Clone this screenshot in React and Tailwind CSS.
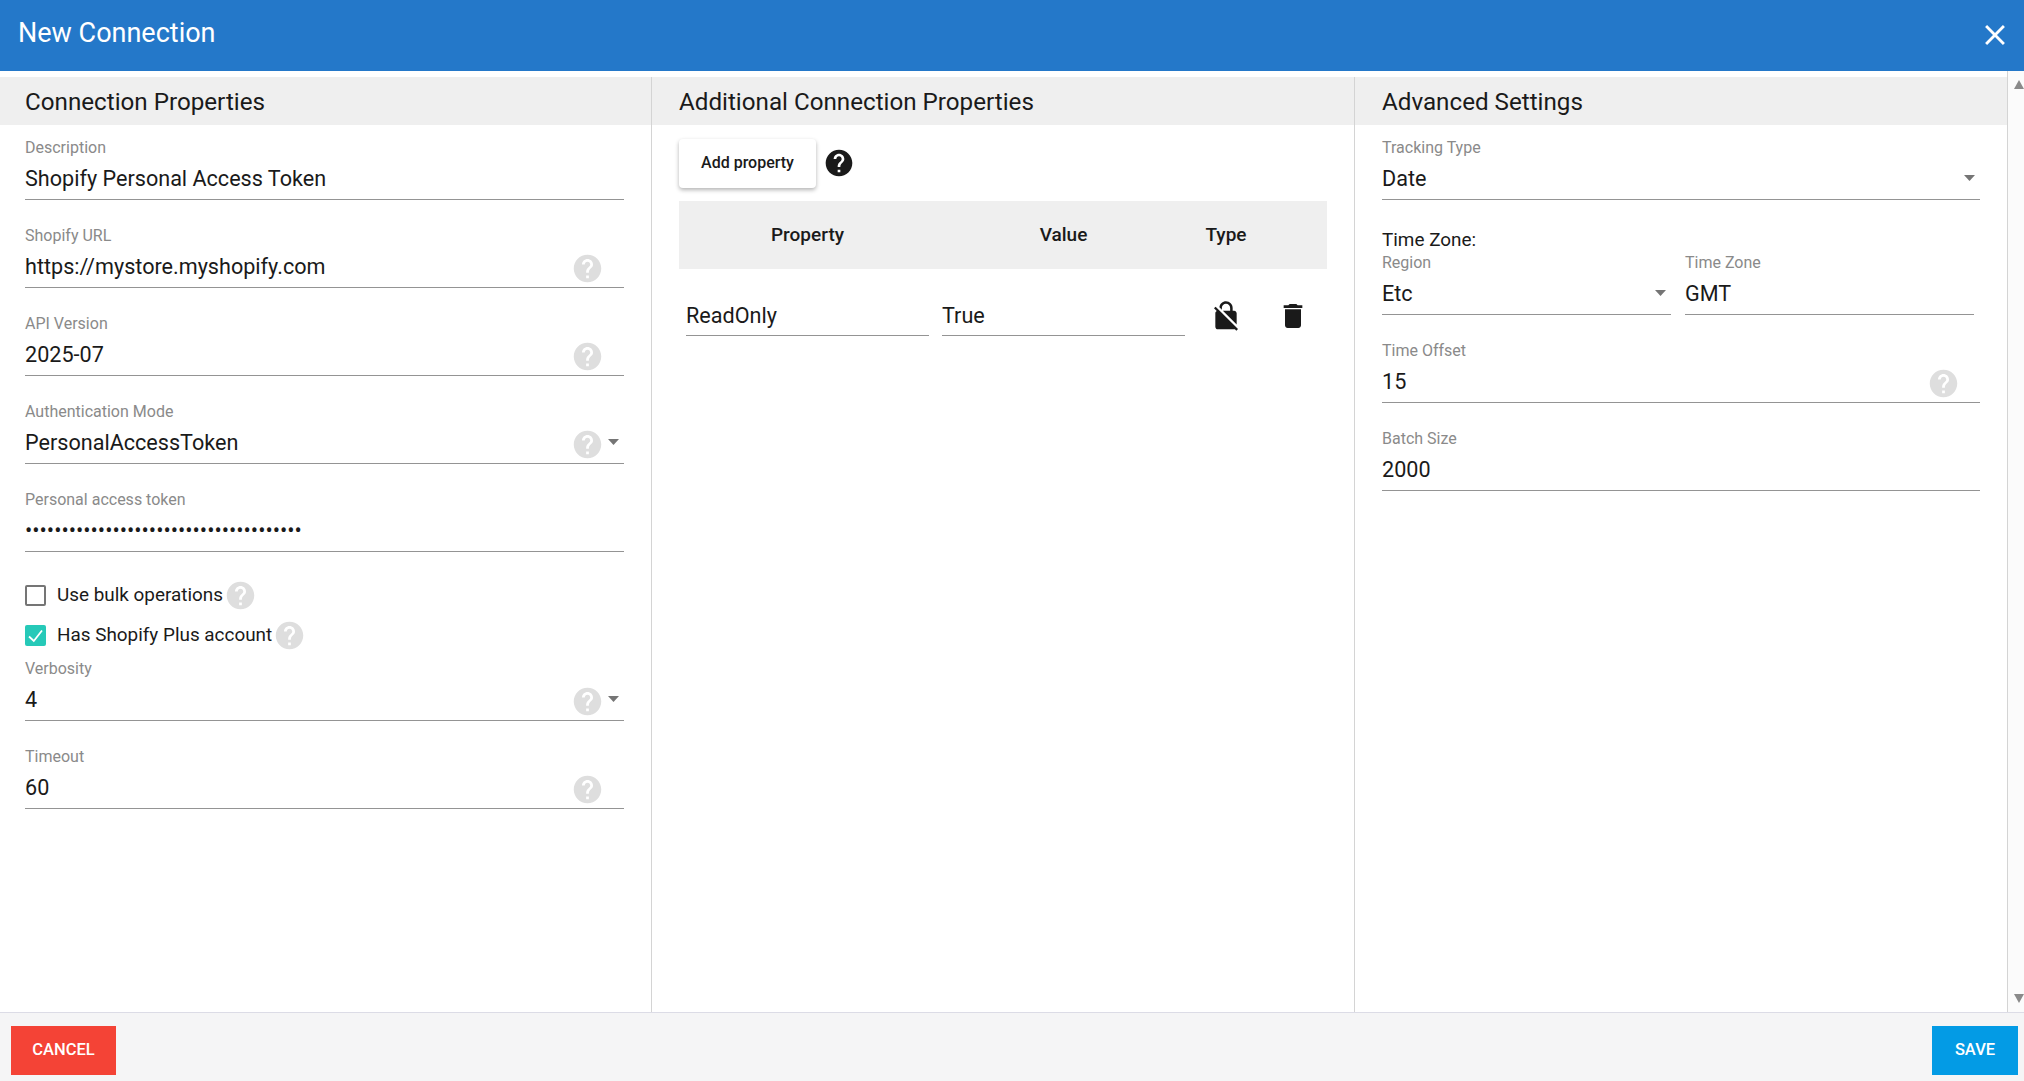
import { MdClose, MdDelete, MdHelp, MdNoEncryption } from "react-icons/md";

function Arrow() {
  return (
    <svg width="11" height="6" viewBox="0 0 11 6" className="ml-[7px] block">
      <path d="M0 0h11L5.5 6z" fill="#757575" />
    </svg>
  );
}

// the svg is bigger than the circle it draws, so pull the sides back in
function Help({ className = "" }) {
  return <MdHelp className={"-mx-[3px] shrink-0 text-[33px] text-[#dedede] " + className} />;
}

function Field({ label, value, help, select, className = "mb-[26px]" }) {
  return (
    <div className={className}>
      <div className="h-5 text-[16px] leading-5 text-[#8a8a8a]">{label}</div>
      <div className="mt-[5px] flex h-[37px] items-start border-b border-[#949494] pb-[6px]">
        <div className="h-[30px] flex-1 text-[21.6px] leading-[32px] text-[#1a1a1a]">{value}</div>
        {help && <Help className="mt-[0.5px]" />}
        {(help || select) && (
          <div className="flex h-[30px] w-[23.5px] shrink-0 items-center">{select && <Arrow />}</div>
        )}
      </div>
    </div>
  );
}

function CheckRow({ label, checked, className }) {
  return (
    <div className={"flex h-[27px] items-center " + className}>
      {checked ? (
        <div className="h-[21px] w-[21px] rounded-[2px] bg-[#26c9b8]">
          <svg width="21" height="21" viewBox="0 0 21 21" fill="none">
            <path d="M4 11.5l4.8 4.5 8.2-10.5" stroke="#fff" strokeWidth="1.8" />
          </svg>
        </div>
      ) : (
        <div className="h-[21px] w-[21px] rounded-[2px] border-2 border-[#757575]" />
      )}
      <span className="ml-[11px] text-[18.9px] text-[#1a1a1a]">{label}</span>
      <Help className="ml-[1px]" />
    </div>
  );
}

function SectionTitle({ children }) {
  return (
    <div className="flex h-12 items-center bg-[#efefef] pt-[2px] text-[24.2px] text-[#1a1a1a]">{children}</div>
  );
}

export default function App() {
  return (
    <div className="flex h-screen flex-col overflow-hidden bg-white font-[Roboto,sans-serif]">
      <div className="flex h-[71px] shrink-0 items-center justify-between bg-[#2478c9] pb-[4px] pl-[18px] pr-[12px] text-white">
        <h1 className="text-[27px]">New Connection</h1>
        <MdClose className="mt-[2px] text-[34px]" />
      </div>

      <div className="flex min-h-0 flex-1">
        <div className="flex flex-1 border-r border-[#d4d4d4] pt-[6px]">
          <div className="w-[652px] border-r border-[#d4d4d4]">
            <SectionTitle>
              <span className="pl-[25px]">Connection Properties</span>
            </SectionTitle>
            <div className="pl-[25px] pr-[27px] pt-[13px]">
              <Field label="Description" value="Shopify Personal Access Token" />
              <Field label="Shopify URL" value="https://mystore.myshopify.com" help />
              <Field label="API Version" value="2025-07" help />
              <Field label="Authentication Mode" value="PersonalAccessToken" help select />
              <Field
                label="Personal access token"
                value="••••••••••••••••••••••••••••••••••••••"
                className="mb-0"
              />
              <CheckRow label="Use bulk operations" className="mt-[30px]" />
              <CheckRow label="Has Shopify Plus account" checked className="mb-[10px] mt-[13px]" />
              <Field label="Verbosity" value="4" help select />
              <Field label="Timeout" value="60" help />
            </div>
          </div>

          <div className="w-[703px] border-r border-[#d4d4d4]">
            <SectionTitle>
              <span className="pl-[27px]">Additional Connection Properties</span>
            </SectionTitle>
            <div className="pl-[27px] pt-[14px]">
              <div className="flex items-center">
                <button className="h-[49px] w-[137px] rounded bg-white pb-[2px] text-[16px] font-medium text-[#1a1a1a] shadow-[0_2px_4px_rgba(0,0,0,0.3)]">
                  Add property
                </button>
                <MdHelp className="mb-[2px] ml-[6.5px] text-[32px] text-[#1a1a1a]" />
              </div>
              <div className="mt-[13px] flex h-[68px] w-[648px] items-center bg-[#efefef] pl-[7px] text-center text-[19px] font-medium text-[#1a1a1a]">
                <div className="w-[243px]">Property</div>
                <div className="ml-[13px] w-[243px]">Value</div>
                <div className="ml-[11px] w-[60px]">Type</div>
              </div>
              <div className="mt-[32px] flex w-[648px] pl-[7px] text-[21.6px] leading-[30px] text-[#1a1a1a]">
                <div className="h-[35px] w-[243px] border-b border-[#949494]">ReadOnly</div>
                <div className="ml-[13px] h-[35px] w-[243px] border-b border-[#949494]">True</div>
                <div className="ml-[11px] flex h-[30px] w-[60px] items-center justify-center">
                  <MdNoEncryption className="text-[32px]" />
                </div>
                <div className="ml-[7px] flex h-[30px] w-[60px] items-center justify-center">
                  <MdDelete className="text-[32px]" />
                </div>
              </div>
            </div>
          </div>

          <div className="flex-1">
            <SectionTitle>
              <span className="pl-[27px]">Advanced Settings</span>
            </SectionTitle>
            <div className="pl-[27px] pr-[27px] pt-[13px]">
              <Field label="Tracking Type" value="Date" select />
              <div className="flex h-[27px] items-center pt-[1px] text-[18.9px] text-[#1a1a1a]">Time Zone:</div>
              <div className="flex">
                <Field label="Region" value="Etc" select className="mb-[26px] w-[289px]" />
                <Field label="Time Zone" value="GMT" className="mb-[26px] ml-[14px] w-[289px]" />
              </div>
              <Field label="Time Offset" value="15" help />
              <Field label="Batch Size" value="2000" />
            </div>
          </div>
        </div>

        <div className="flex w-[16px] shrink-0 flex-col items-end justify-between bg-[#fbfbfb] py-[9px]">
          <svg width="10" height="9" viewBox="0 0 10 9">
            <path d="M0 9L5 0l5 9z" fill="#8a8a8a" />
          </svg>
          <svg width="10" height="9" viewBox="0 0 10 9">
            <path d="M0 0h10L5 9z" fill="#8a8a8a" />
          </svg>
        </div>
      </div>

      <div className="flex h-[69px] shrink-0 items-start justify-between border-t border-[#dcdce6] bg-[#f5f5f6] pl-[11px] pr-[6px] pt-[13px]">
        <button className="h-[49px] w-[105px] bg-[#f44336] text-[16.5px] font-medium text-white">CANCEL</button>
        <button className="h-[49px] w-[86px] bg-[#039be5] text-[16.5px] font-medium text-white">SAVE</button>
      </div>
    </div>
  );
}
